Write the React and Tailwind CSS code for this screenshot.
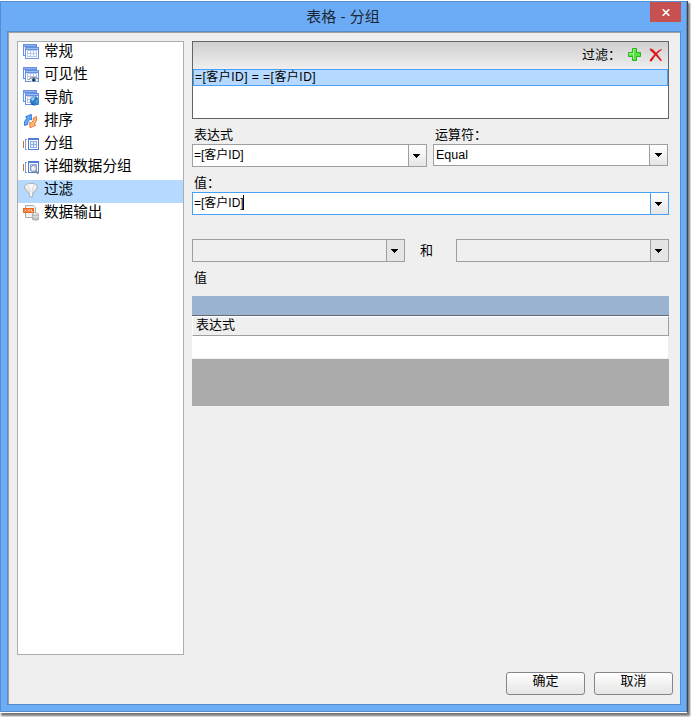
import React from 'react';

const TableBase = () => (
    <g shapeRendering="crispEdges">
        <path d="M0 0h14v12h-14z" fill="#6690e0" />
        <path d="M1 1h12v1h-12z" fill="#8db1f1" />
        <path d="M1 3h12v8h-12z" fill="#f4f7fe" />
        <path d="M2 3h14v12h-14z" fill="#6690e0" />
        <path d="M3 4h12v1h-12z" fill="#9bbbf4" />
        <path d="M3 6h12v8h-12z" fill="#fff" />
        <path d="M4.5 6.5h9v6h-9zM4.5 9.5h9M7.5 6.5v6M10.5 6.5v6" fill="none" stroke="#b6c7ee" />
    </g>
);

const Icon = ({ children }) => (
    <svg className="mt-[2px] h-4 w-4 shrink-0" viewBox="0 0 16 16">{children}</svg>
);

const TableIcon = () => <Icon><TableBase /></Icon>;

const VisibilityIcon = () => (
    <Icon>
        <TableBase />
        <path d="M5.5 13q5-4.5 10.5-.5q-5 5-10.5.5z" fill="#eef2f6" />
        <path d="M5.5 12.7q5-4.2 10.5-.4" fill="none" stroke="#68727e" />
        <circle cx="10.8" cy="13" r="2" fill="#2d628d" />
        <circle cx="10.8" cy="13.2" r="1" fill="#132b40" />
    </Icon>
);

const NavigationIcon = () => (
    <Icon>
        <TableBase />
        <circle cx="11.5" cy="11" r="4.5" fill="#2b7dc6" />
        <path d="M8 9q2-2.5 4-2l-1 3-2 1z" fill="#9dd3f4" />
        <path d="M12.5 10.5l2.5-1.5.7 2-1.5 2.5-2-.5z" fill="#4b9bdb" />
        <path d="M8 13l2 1 1 1.500-2-.7z" fill="#174f91" />
    </Icon>
);

const SortIcon = () => (
    <Icon>
        <path d="M1.5 12.5V8.5L4 4.8 2.5 3.8 8.3 1.3 8.6 7 7 6.2 4.8 9V11.5z" fill="#5aa9f8" stroke="#2a6fd0" strokeWidth=".8" />
        <path d="M13.5 3.5V7.8L11.2 11.3 12.8 12.3 7 14.8 6.7 9.2 8.3 10 10.3 7.5V5z" fill="#ffb978" stroke="#e8702a" strokeWidth=".9" />
    </Icon>
);

const GroupBase = () => (
    <g shapeRendering="crispEdges">
        <path d="M0 5h1v7h-1z" fill="#d46b22" />
        <path d="M4 3.5h-1.5v10h1.5" fill="none" stroke="#7e9ed8" />
        <path d="M5 2h11v12h-11z" fill="#4f7ed6" />
        <path d="M6 4h9v9h-9z" fill="#fff" />
        <path d="M7.5 5.5h6v6h-6zM7.5 8.5h6M10.5 5.5v6" fill="#e8effc" stroke="#91ade6" />
    </g>
);

const GroupIcon = () => <Icon><GroupBase /></Icon>;

const DetailGroupIcon = () => (
    <Icon>
        <GroupBase />
        <circle cx="10.5" cy="9.5" r="3" fill="#e7f2fb" stroke="#8f98a5" strokeWidth="1.2" />
        <path d="M12.6 11.8l2.7 3" stroke="#8d8d8d" strokeWidth="2" />
    </Icon>
);

const FilterIcon = () => (
    <Icon>
        <path d="M1.3 5C1.5.2 14.2.2 14.6 5C14.5 8 11.5 10 9.7 11v3.5q-1.7 1.4-3.4 0V11C4.5 10 1.5 8 1.3 5z" fill="#dedede" stroke="#aaa" strokeWidth=".8" />
        <path d="M2.5 4.5q1-2.5 5.5-2.5t5.5 2.5L9 9.5H7z" fill="#f8f8f8" />
        <path d="M5 3l2.3 6.5M11 3L8.7 9.5" stroke="#ccc" strokeWidth=".7" />
        <path d="M7.3 9.5h1.5v4.5h-1.5z" fill="#fff" />
    </Icon>
);

const ExportIcon = () => (
    <Icon>
        <path d="M2.5.5h8l2 2v10h-10z" fill="#f3f3f3" stroke="#aaa" />
        <path d="M0 3h11v5h-11z" fill="#ed671e" />
        <path d="M1.5 4.5l2 2m0-2l-2 2M5 6.7V4.5l1 1 1-1v2.2M8.5 4.3v2.2h1.5" fill="none" stroke="#ffe5c8" strokeWidth=".8" />
        <path d="M9.5 9v5.5q3 1.5 6 0V9z" fill="#c4c4c4" stroke="#999" strokeWidth=".7" />
        <ellipse cx="12.5" cy="9" rx="3" ry="1.3" fill="#eee" stroke="#aaa" strokeWidth=".7" />
        <path d="M9.5 11.5q3 1.3 6 0" fill="none" stroke="#eee" strokeWidth=".8" />
    </Icon>
);

const menuItems = [
    { label: '常规', icon: TableIcon },
    { label: '可见性', icon: VisibilityIcon },
    { label: '导航', icon: NavigationIcon },
    { label: '排序', icon: SortIcon },
    { label: '分组', icon: GroupIcon },
    { label: '详细数据分组', icon: DetailGroupIcon },
    { label: '过滤', icon: FilterIcon, active: true },
    { label: '数据输出', icon: ExportIcon },
];

const Sidebar = () => (
    <div className="h-[614px] w-[167px] shrink-0 border border-[#abadb3] bg-white">
        {menuItems.map(({ label, icon: ItemIcon, active }) => (
            <div
                key={label}
                className={`flex h-[23px] items-start pl-[5px] ${active ? 'bg-[#b5d9ff]' : ''}`}
            >
                <ItemIcon />
                <span className="ml-[5px] text-[14.6px] leading-[18px] whitespace-nowrap">{label}</span>
            </div>
        ))}
    </div>
);

const Expression = () => (
    <span>=[<span className="text-[12px]">客户</span>ID]</span>
);

const ComboBox = ({ children, className = '', arrowClass = 'pl-1', focused, disabled }) => (
    <div className={`flex border ${focused ? 'border-[#48a1f5]' : 'border-[#9f9f9f]'} ${disabled ? 'bg-[#efefef]' : 'bg-white'} ${className}`}>
        <div className="flex flex-1 items-start pt-[2px] pl-px text-[12px] leading-[16px] whitespace-nowrap">
            {children}
        </div>
        <div className={`flex w-[18px] items-center border-l ${arrowClass} ${focused ? 'border-[#48a1f5]' : 'border-[#9f9f9f]'} ${disabled ? 'bg-[#e5e5e5]' : 'bg-linear-to-b from-white to-[#e5e5e5]'}`}>
            <svg width="7" height="4" viewBox="0 0 7 4" shapeRendering="crispEdges">
                <path d="M0 0h7v1h-1v1h-1v1h-1v1h-1v-1h-1v-1h-1v-1h-1z" />
            </svg>
        </div>
    </div>
);

const FilterList = () => (
    <div className="h-[78px] w-[477px] border border-[#646464] bg-white">
        <div className="flex h-[27px] items-center justify-end bg-linear-to-b from-[#cfcfcf] to-[#efefef] pr-[5px]">
            <span className="mr-[7px] -mt-[2px] text-[13px] leading-4">过滤：</span>
            <svg className="mr-[7px] -mt-px" width="14" height="14" viewBox="0 0 14 14">
                <path d="M4.5.5h4v4h4v4h-4v4h-4v-4h-4v-4h4z" fill="#54e33f" stroke="#28b51c" />
                <path d="M5.5 11V1.5h1M1.5 7V5.5h4" fill="none" stroke="#a7f49a" />
            </svg>
            <svg className="-mt-px" width="14" height="14" viewBox="0 0 14 14">
                <path d="M.8.5Q2.5.3 4 1.5Q8.5 5.5 13 12.6L11.8 13.3Q7.5 8 .8 2z" fill="#df1b20" />
                <path d="M13.5 1.2Q7.5 5 2.8 13.3L.8 13.5V11.8Q5.5 5.5 10 2Q11.5.9 13.5 1.2z" fill="#df1b20" />
            </svg>
        </div>
        <div className="flex h-[17px] border border-[#48a1f5] bg-[#b5d9ff] text-[12px] leading-[14px]">
            <span className="ml-px tracking-[0.47px] whitespace-pre"><Expression /> = <Expression /></span>
        </div>
    </div>
);

const Label = ({ children, className = '' }) => (
    <div className={`pl-[2px] text-[13px] leading-4 ${className}`}>{children}</div>
);

const FilterPanel = () => (
    <div className="ml-2 w-[477px]">
        <FilterList />
        <div className="mt-2 flex gap-[6px]">
            <div className="w-[235px]">
                <Label>表达式</Label>
                <ComboBox className="mt-px h-[23px]"><Expression /></ComboBox>
            </div>
            <div className="w-[235px]">
                <Label>运算符：</Label>
                <ComboBox className="mt-px h-[22px]" arrowClass="pl-[5px]">
                    <span className="ml-px text-[12.5px]">Equal</span>
                </ComboBox>
            </div>
        </div>
        <Label className="mt-2">值：</Label>
        <ComboBox className="mt-px h-[23px]" focused>
            <Expression />
            <span className="-ml-px h-[15px] w-px bg-black" />
        </ComboBox>
        <div className="mt-6 flex">
            <ComboBox className="h-[23px] w-[213px]" disabled />
            <span className="mt-1 ml-[15px] w-[36px] text-[13px] leading-4">和</span>
            <ComboBox className="h-[23px] w-[213px]" disabled />
        </div>
        <Label className="mt-2">值</Label>
        <div className="mt-[10px]">
            <div className="h-5 border-b border-[#646a73] bg-[#99b3d1]" />
            <div className="h-5 border-t border-r border-b border-l border-t-white border-r-[#9f9f9f] border-b-[#9f9f9f] border-l-white bg-[#efefef] pl-[3px] text-[13px] leading-[15px]">
                表达式
            </div>
            <div className="mr-px h-[22px] bg-white" />
            <div className="mt-px h-[47px] bg-[#ababab]" />
        </div>
    </div>
);

const DialogButton = ({ children }) => (
    <button className="h-[23px] w-[79px] rounded-[3px] border border-[#858585] bg-linear-to-b from-white to-[#e5e5e5] pb-[5px] text-[13px] leading-4">
        {children}
    </button>
);

const TitleBar = () => (
    <div className="flex h-[29px]">
        <div className="flex-1 pl-[29px] text-center text-[15px] leading-[29px] text-[#1c2733]">表格 - 分组</div>
        <button className="mr-[5px] flex h-5 w-[31px] items-center justify-center bg-[#c75050]">
            <svg width="8" height="7" viewBox="0 0 8 7">
                <path d="M.7.2L7.3 6.8M7.3.2L.7 6.8" stroke="#fff" strokeWidth="1.6" />
            </svg>
        </button>
    </div>
);

const App = () => (
    <div className="h-[717px] w-[691px] overflow-hidden bg-white pt-px font-['Liberation_Sans','Noto_Sans_CJK_SC',sans-serif] text-black">
        <div className="h-[711px] w-[687px] border border-[#548dca] bg-[#6cacf7] pl-[6px] shadow-[1px_0_0_#444,0_1px_0_#fff,2px_3px_2px_1px_#777]">
            <TitleBar />
            <div className="h-[674px] w-[674px] border border-[#548dca]">
                <div className="h-[672px] border-t border-l border-[#a0a0a0] bg-[#efefef] pt-2 pl-2">
                    <div className="flex">
                        <Sidebar />
                        <FilterPanel />
                    </div>
                    <div className="mt-[17px] mr-[7px] flex justify-end gap-[9px]">
                        <DialogButton>确定</DialogButton>
                        <DialogButton>取消</DialogButton>
                    </div>
                </div>
            </div>
        </div>
    </div>
);

export default App;
